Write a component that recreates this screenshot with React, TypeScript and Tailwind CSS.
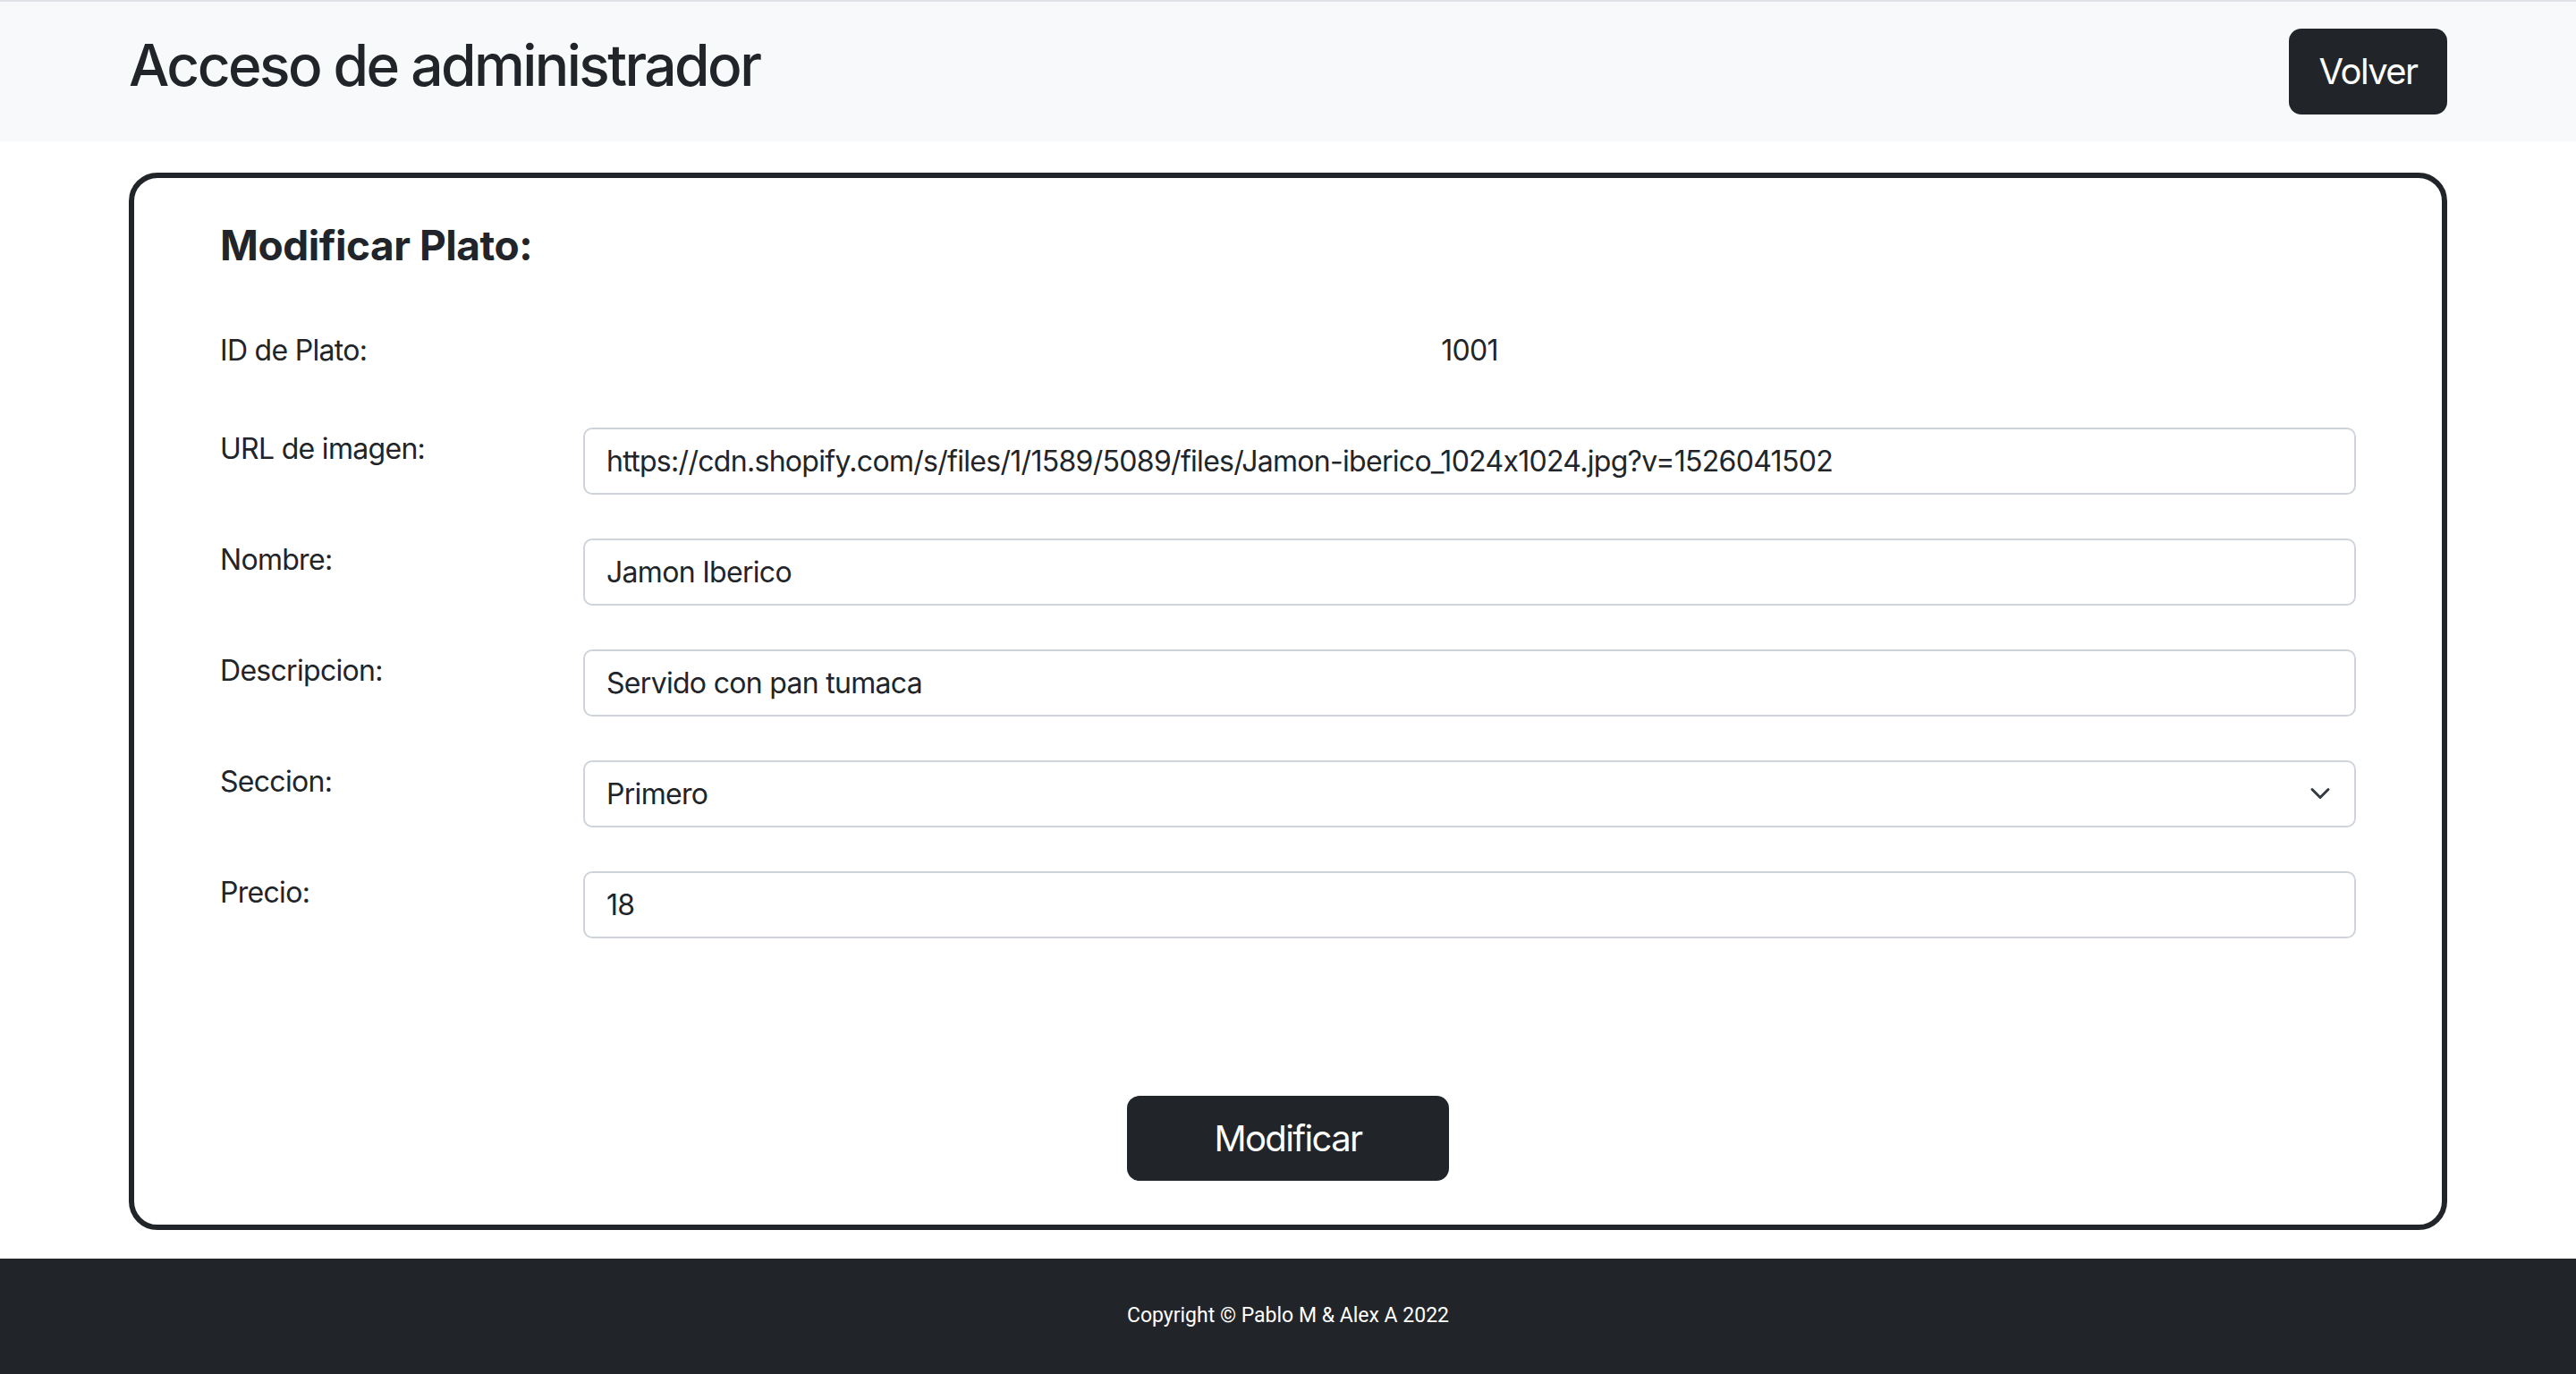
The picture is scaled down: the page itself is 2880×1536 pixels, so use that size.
import React from "react";

const FONT = {
  fontFamily: "Inter, 'Noto Sans', 'Liberation Sans', sans-serif",
  fontFeatureSettings: "'calt' 0",
};

function Row({ label, children }: { label: string; children: React.ReactNode }) {
  return (
    <div className="flex items-start h-[75px] mb-[49px]">
      <div className="w-[406px] text-[32px] leading-[48px] tracking-[-0.7px]">{label}</div>
      <div className="flex-1">{children}</div>
    </div>
  );
}

function TextInput({ value }: { value: string }) {
  return (
    <input
      readOnly
      value={value}
      style={{ fontFeatureSettings: "'calt' 0" }}
      className="w-full h-[75px] border-2 border-[#ced4da] rounded-[10px] px-[24px] text-[32px] tracking-[-0.7px] text-[#212529] bg-white outline-none"
    />
  );
}

export default function App() {
  return (
    <div className="h-[1536px] flex flex-col bg-white text-[#212529]" style={FONT}>
      <header className="h-[158px] bg-[#f8f9fa] border-t-2 border-[#dee2e6] shrink-0">
        <div className="w-[2592px] mx-auto flex justify-between items-start">
          <h2 className="mt-[33px] text-[64px] leading-[1.2] font-medium tracking-[-0.04em]">Acceso de administrador</h2>
          <button className="mt-[30px] w-[177px] h-[96px] rounded-[14px] bg-[#212529] text-white text-[40px] tracking-[-0.04em]">
            Volver
          </button>
        </div>
      </header>

      <main className="w-[2592px] mx-auto mt-[35px] shrink-0">
        <div className="h-[1182px] border-[6px] border-[#212529] rounded-[32px] px-[96px] pt-[48px] flex flex-col">
          <h5 className="text-[46px] leading-[54px] font-bold tracking-[-0.01em]">Modificar Plato:</h5>
          <div className="flex items-start h-[48px] mt-[67px] mb-[62px]">
            <div className="w-[406px] text-[32px] leading-[48px] tracking-[-0.7px]">ID de Plato:</div>
            <div className="flex-1 text-center text-[32px] leading-[48px] tracking-[-0.7px]">1001</div>
          </div>
          <Row label="URL de imagen:">
            <TextInput value="https://cdn.shopify.com/s/files/1/1589/5089/files/Jamon-iberico_1024x1024.jpg?v=1526041502" />
          </Row>
          <Row label="Nombre:">
            <TextInput value="Jamon Iberico" />
          </Row>
          <Row label="Descripcion:">
            <TextInput value="Servido con pan tumaca" />
          </Row>
          <Row label="Seccion:">
            <div className="relative">
              <select
                defaultValue="Primero"
                className="w-full h-[75px] border-2 border-[#ced4da] rounded-[10px] pl-[24px] pr-[72px] text-[32px] tracking-[-0.7px] text-[#212529] bg-white outline-none appearance-none"
              >
                <option>Primero</option>
                <option>Segundo</option>
                <option>Postre</option>
              </select>
              <svg
                className="absolute right-[28px] top-[25px] pointer-events-none"
                width="24"
                height="24"
                viewBox="0 0 16 16"
                fill="none"
              >
                <path d="m2 5 6 6 6-6" stroke="#343a40" strokeWidth="2" strokeLinecap="round" strokeLinejoin="round" />
              </svg>
            </div>
          </Row>
          <Row label="Precio:">
            <TextInput value="18" />
          </Row>
          <div className="flex justify-center mt-[127px]">
            <button className="w-[360px] h-[95px] rounded-[14px] bg-[#212529] text-white text-[40px] tracking-[-0.04em]">Modificar</button>
          </div>
        </div>
      </main>

      <footer className="mt-auto h-[129px] bg-[#212529] flex items-center justify-center shrink-0">
        <span className="text-white text-[23px]" style={{ fontFamily: "Roboto, Inter, sans-serif" }}>
          Copyright © Pablo M &amp; Alex A 2022
        </span>
      </footer>
    </div>
  );
}
